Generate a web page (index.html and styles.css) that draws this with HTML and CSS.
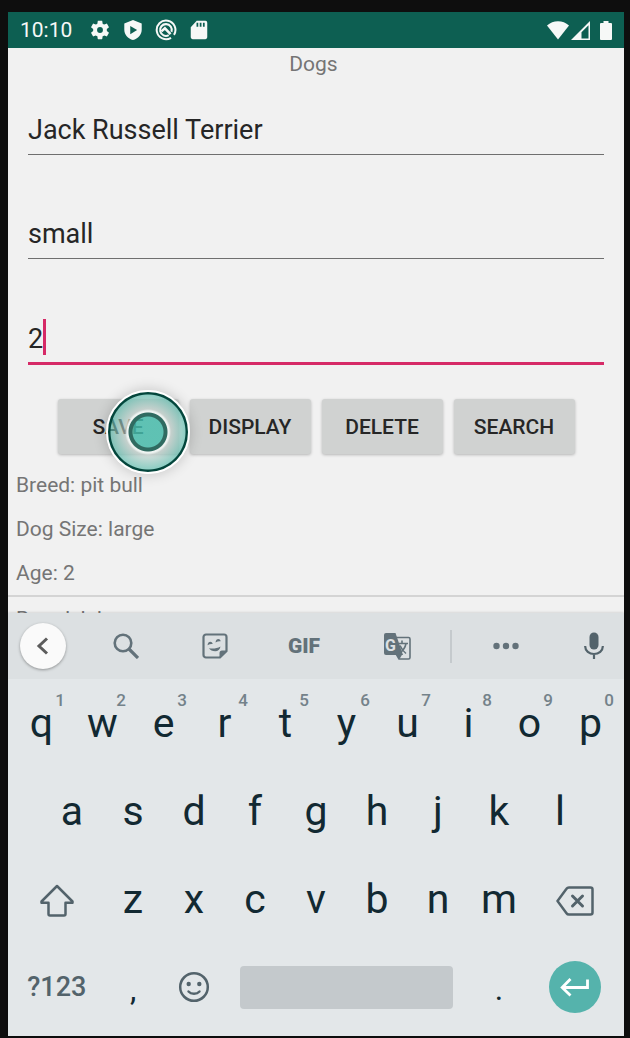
FILE: index.html
```html
<!DOCTYPE html>
<html lang="en">
<head>
<meta charset="utf-8">
<meta name="viewport" content="width=device-width, initial-scale=1">
<title>Dogs</title>
<link rel="stylesheet" href="styles.css">
</head>
<body>
<div class="screen">
  <header class="status">
    <span class="clock">10:10</span>
    <svg class="status-icon" viewBox="0 0 24 24" aria-hidden="true"><path d="M19.43 12.98c.04-.32.07-.64.07-.98s-.03-.66-.07-.98l2.11-1.65c.19-.15.24-.42.12-.64l-2-3.46c-.12-.22-.39-.3-.61-.22l-2.49 1c-.52-.4-1.08-.73-1.69-.98l-.38-2.65C14.46 2.18 14.25 2 14 2h-4c-.25 0-.46.18-.49.42l-.38 2.65c-.61.25-1.17.59-1.69.98l-2.49-1c-.23-.09-.49 0-.61.22l-2 3.46c-.13.22-.07.49.12.64l2.11 1.65c-.04.32-.07.65-.07.98s.03.66.07.98l-2.11 1.65c-.19.15-.24.42-.12.64l2 3.46c.12.22.39.3.61.22l2.49-1c.52.4 1.08.73 1.69.98l.38 2.65c.03.24.24.42.49.42h4c.25 0 .46-.18.49-.42l.38-2.65c.61-.25 1.17-.59 1.69-.98l2.49 1c.23.09.49 0 .61-.22l2-3.46c.12-.22.07-.49-.12-.64l-2.11-1.65zM12 15.2a3.2 3.2 0 1 1 0-6.4 3.2 3.2 0 0 1 0 6.4z"/></svg>
    <svg class="status-icon" viewBox="0 0 24 24" aria-hidden="true"><path fill-rule="evenodd" d="M12 1 2.500 4.800v7C2.500 17 6.500 21.500 12 23c5.500-1.500 9.500-6 9.500-11.200v-7zM9 7.500v9l7.500-4.500z"/></svg>
    <svg class="status-icon" viewBox="0 0 24 24" aria-hidden="true"><g fill="none" stroke="currentColor"><path stroke-width="2.200" d="M17.500 20.500A10.200 10.200 0 1 1 20.700 17.300"/><path stroke-width="2.200" d="M15 17.600A6.400 6.400 0 1 1 18 14"/><path stroke-width="2.800" d="M7 13.500 10.800 10.200 17 16.500"/></g></svg>
    <svg class="status-icon" viewBox="0 0 24 24" aria-hidden="true"><path fill-rule="evenodd" d="M9.500 2H19a2 2 0 0 1 2 2v16a2 2 0 0 1-2 2H5a2 2 0 0 1-2-2V9zM9.300 4v4.500h1.900V4zM12.800 4v4.500h1.900V4zM16.300 4v4.500h1.900V4z"/></svg>
    <div class="status-right">
      <svg class="wifi" viewBox="0 0 22 19" aria-hidden="true"><path d="M0 4.500C6-1.300 16-1.300 22 4.500L11 18.500z"/></svg>
      <svg class="signal" viewBox="0 0 19 19" aria-hidden="true"><path fill-rule="evenodd" d="M0 19 19 0v19zM10.500 17.500h7V4.200l-7 7z"/></svg>
      <svg class="battery" viewBox="0 0 12 19" aria-hidden="true"><path d="M3.500 0h5v2H11a1 1 0 0 1 1 1v15a1 1 0 0 1-1 1H1a1 1 0 0 1-1-1V3a1 1 0 0 1 1-1h2.500z"/></svg>
    </div>
  </header>

  <main class="app">
    <h1 class="title">Dogs</h1>
    <form class="form">
      <div class="field"><input class="input" type="text" aria-label="Breed" value="Jack Russell Terrier"></div>
      <div class="field"><input class="input" type="text" aria-label="Dog size" value="small"></div>
      <div class="field"><input class="input input-active" type="text" aria-label="Age" value="2"><span class="caret"></span></div>
      <div class="actions">
        <div class="action-slot">
          <button class="action" type="button">SAVE</button>
          <span class="touch"></span>
        </div>
        <button class="action" type="button">DISPLAY</button>
        <button class="action" type="button">DELETE</button>
        <button class="action" type="button">SEARCH</button>
      </div>
    </form>
    <ul class="dogs">
      <li class="dog"><p>Breed: pit bull</p><p>Dog Size: large</p><p>Age: 2</p></li>
      <li class="dog"><p>Breed: lab</p></li>
    </ul>
  </main>

  <section class="keyboard" aria-label="Keyboard">
    <div class="tools">
      <button class="tool tool-back" aria-label="Back"><svg viewBox="0 0 24 24" width="24" height="24"><path fill="none" stroke="currentColor" stroke-width="3" d="m16 4.500-8 7.500 8 7.500"/></svg></button>
      <button class="tool" aria-label="Search"><svg viewBox="0 0 26 26" width="26" height="26"><g fill="none" stroke="currentColor"><circle cx="10" cy="10" r="8.300" stroke-width="2.600"/><path stroke-width="3.200" d="m16 16 9 9"/></g></svg></button>
      <button class="tool" aria-label="Stickers"><svg viewBox="0 0 26 26" width="26" height="26"><path fill="none" stroke="currentColor" stroke-width="2.200" d="M4 1.500h18A2.500 2.500 0 0 1 24.500 4v14l-6.500 6.500H4A2.500 2.500 0 0 1 1.500 22V4A2.500 2.500 0 0 1 4 1.500z"/><path d="M17.500 25v-5a2.500 2.500 0 0 1 2.500-2.500h5zM7 15.200c4 .8 8 .2 11.500-1.800-.5 3-2.500 4.800-5.300 4.800-2.800 0-5-1.200-6.200-3zM5.500 12.200c.3-4 4.500-4.600 5.200-1.200-1.800-.2-3.500.2-5.200 1.200zM13.500 9.500c.3-4 4.500-4.600 5.200-1.200-1.800-.2-3.500.2-5.200 1.200z"/></svg></button>
      <button class="tool tool-gif">GIF</button>
      <button class="tool" aria-label="Translate"><svg viewBox="0 0 27 27" width="27" height="27"><path d="M2 0h9.500L19 22H2a2 2 0 0 1-2-2V2a2 2 0 0 1 2-2z"/><path fill="none" stroke="currentColor" stroke-width="1.600" d="M12 4.500h12.500a1.500 1.500 0 0 1 1.500 1.500v18.500a1.500 1.500 0 0 1-1.500 1.500H15l-2.500-4.500"/><path d="m12 21 3.500 5 3-5z"/><text class="translate-g" x="1" y="18">G</text><path fill="none" stroke="currentColor" stroke-width="1.600" d="M14.500 10.500H24M18 7.500v3M22 10.500c-.8 4-3 7-5.500 9M16 12.500c1.500 3.500 3.500 6 6 8"/></svg></button>
      <span class="divider"></span>
      <button class="tool" aria-label="More"><svg viewBox="0 0 26 8" width="26" height="8"><circle cx="3.500" cy="4" r="3.200"/><circle cx="13" cy="4" r="3.200"/><circle cx="22.500" cy="4" r="3.200"/></svg></button>
      <button class="tool tool-mic" aria-label="Voice input"><svg viewBox="0 0 20 28" width="20" height="28"><rect x="5.500" y="0.500" width="9" height="17" rx="4.500"/><path fill="none" stroke="currentColor" stroke-width="2.200" d="M1.200 14v.5a8.800 7.500 0 0 0 17.600 0V14M10 22v5"/></svg></button>
    </div>
    <div class="keys">
      <div class="row">
        <button class="key">q<sup>1</sup></button><button class="key">w<sup>2</sup></button><button class="key">e<sup>3</sup></button><button class="key">r<sup>4</sup></button><button class="key">t<sup>5</sup></button><button class="key">y<sup>6</sup></button><button class="key">u<sup>7</sup></button><button class="key">i<sup>8</sup></button><button class="key">o<sup>9</sup></button><button class="key">p<sup>0</sup></button>
      </div>
      <div class="row row-inset">
        <button class="key">a</button><button class="key">s</button><button class="key">d</button><button class="key">f</button><button class="key">g</button><button class="key">h</button><button class="key">j</button><button class="key">k</button><button class="key">l</button>
      </div>
      <div class="row">
        <button class="key key-wide key-icon" aria-label="Shift"><svg viewBox="0 0 34 34" width="34" height="34"><path fill="none" stroke="currentColor" stroke-width="2.500" stroke-linejoin="round" d="M17 2 1.500 17.500v1.300h7V30a1.500 1.500 0 0 0 1.500 1.500h14a1.500 1.500 0 0 0 1.500-1.500V18.800h7v-1.300z"/></svg></button>
        <button class="key">z</button><button class="key">x</button><button class="key">c</button><button class="key">v</button><button class="key">b</button><button class="key">n</button><button class="key">m</button>
        <button class="key key-wide key-icon" aria-label="Delete"><svg viewBox="0 0 38 30" width="38" height="30"><g fill="none" stroke="currentColor" stroke-width="2.500" stroke-linejoin="round"><path d="M13 1.500h21.500a2 2 0 0 1 2 2v23a2 2 0 0 1-2 2H13a3 3 0 0 1-2.500-1.300L1.500 15l9-12.200A3 3 0 0 1 13 1.500z"/><path stroke-width="3" stroke-linecap="round" d="m16.500 10 10 10M26.500 10l-10 10"/></g></svg></button>
      </div>
      <div class="row">
        <button class="key key-wide key-symbols">?123</button>
        <button class="key key-mark">,</button>
        <button class="key" aria-label="Emoji"><svg viewBox="0 0 32 32" width="32" height="32"><circle cx="16" cy="16" r="13.800" fill="none" stroke="currentColor" stroke-width="2.500"/><circle cx="10.700" cy="13" r="2.200"/><circle cx="21.300" cy="13" r="2.200"/><path fill="none" stroke="currentColor" stroke-width="2.400" stroke-linecap="round" d="M10.500 20.500c2.600 3 8.400 3 11 0"/></svg></button>
        <button class="key key-space" aria-label="Space"></button>
        <button class="key key-mark">.</button>
        <button class="key key-wide" aria-label="Enter"><span class="enter"><svg viewBox="0 0 30 20" width="30" height="20"><path fill="none" stroke="currentColor" stroke-width="2.800" d="M27.500 2.500v8H2.500M10.500 2l-8.300 8.500 8.300 8"/></svg></span></button>
      </div>
    </div>
  </section>
</div>
</body>
</html>
```
FILE: styles.css
```css
* { box-sizing: border-box; }

body {
  margin: 0;
  height: 100vh;
  padding: 12px 6px 2px 8px;
  background: #0e0e0e;
  font-family: Roboto, "Liberation Sans", sans-serif;
}

button, input { font: inherit; }

button {
  padding: 0;
  border: 0;
  background: none;
  color: inherit;
}

svg { display: block; fill: currentColor; }

.screen {
  display: flex;
  flex-direction: column;
  height: 100%;
  background: #f1f1f1;
}

/* Status bar */
.status {
  display: flex;
  align-items: center;
  gap: 11px;
  height: 36px;
  padding: 0 12px;
  background: #0d5f52;
  color: #f6f8f7;
}

.clock { margin-right: 6px; font-size: 21px; }
.status-icon { width: 22px; height: 22px; }

.status-right {
  display: flex;
  align-items: center;
  gap: 2px;
  margin-left: auto;
}

.wifi { width: 22px; height: 19px; }
.signal { width: 19px; height: 19px; }
.battery { width: 12px; height: 19px; margin-left: 8px; }

/* App */
.app {
  flex: 1;
  min-height: 0;
  overflow: hidden;
}

.title {
  margin: 0;
  padding-right: 5px;
  font-size: 21px;
  font-weight: 400;
  line-height: 32px;
  text-align: center;
  color: #757575;
}

.form { padding: 0 20px; }
.field { position: relative; padding-top: 28px; margin-bottom: 29px; }

.input {
  display: block;
  width: 100%;
  height: 47px;
  padding: 0 0 2px;
  border: 0;
  border-bottom: 1px solid #6f6f6f;
  outline: 0;
  background: transparent;
  font-size: 27px;
  color: #262626;
}

.input-active { height: 49px; padding-bottom: 0; border-bottom: 3px solid #d62a67; }

.caret {
  position: absolute;
  left: 15px;
  top: 31px;
  width: 3px;
  height: 36px;
  background: #d62a67;
}

.actions {
  display: flex;
  justify-content: center;
  gap: 11px;
  margin-top: 34px;
}

.action-slot { position: relative; }

.action {
  width: 121px;
  height: 55px;
  border-radius: 3px;
  background: #d0d2d1;
  box-shadow: 0 1px 3px rgba(0, 0, 0, .25);
  font-size: 21px;
  font-weight: 500;
  color: #262626;
}

.touch {
  position: absolute;
  z-index: 1;
  left: 48px;
  top: -9px;
  width: 84px;
  height: 84px;
  border: 2px solid #fff;
  border-radius: 50%;
  background: radial-gradient(circle closest-side,
    rgba(70, 190, 173, .82) 15px, #306b61 16px 19px, #eef3f1 20px 21px,
    rgba(190, 207, 202, .6) 23px, rgba(92, 188, 173, .66) 37px, #03463c 38px);
  box-shadow: 0 0 14px rgba(0, 0, 0, .2);
}

.dogs {
  margin: 9px 0 0;
  padding: 0;
  list-style: none;
  font-size: 21px;
  line-height: 44px;
  color: #757575;
}

.dog { padding: 0 8px; border-bottom: 2px solid #d4d4d4; }
.dog p { margin: 0; }

/* Keyboard */
.keyboard {
  position: relative;
  background: #e3e7e9;
  box-shadow: 0 0 3px rgba(0, 0, 0, .2);
  color: #122932;
}

.tools {
  display: grid;
  grid-template-columns: 74fr 88fr 90fr 88fr 98fr 10fr 100fr 68fr;
  align-items: center;
  height: 66px;
  background: #dce0e2;
  color: #63727a;
}

.tool { display: grid; place-items: center; }

.tool-back {
  width: 46px;
  height: 46px;
  margin-left: 12px;
  border-radius: 50%;
  background: #fafafa;
  box-shadow: 0 1px 3px rgba(0, 0, 0, .35);
  color: #5c5c5c;
}

.tool-gif { font-size: 21px; font-weight: 900; }
.tool-mic { padding-left: 8px; color: #53636b; }
.translate-g { font: 700 16px Roboto, sans-serif; fill: #dce0e2; }
.divider { justify-self: center; width: 2px; height: 33px; background: #c5cacd; }

.keys { padding: 0 3px 5px; }
.row { display: flex; height: 88px; }
.row-inset { padding: 0 5%; }

.key {
  position: relative;
  display: flex;
  flex: 2 1 0;
  align-items: center;
  justify-content: center;
  font-size: 41px;
}

.key sup {
  position: absolute;
  right: 7px;
  top: 11px;
  font-size: 17px;
  font-weight: 500;
  line-height: 20px;
  color: #74828a;
}

.key svg { color: #53636b; }
.key-wide { flex-grow: 3; }
.key-icon { padding-top: 4px; }
.key-symbols { font-size: 27px; font-weight: 500; color: #53636b; }
.key-mark { font-size: 32px; padding-top: 4px; }

.key-space {
  flex-grow: 7;
  align-self: center;
  height: 43px;
  margin: 0 15px;
  border-radius: 4px;
  background: #c4c9cc;
}

.enter {
  display: grid;
  place-items: center;
  width: 52px;
  height: 52px;
  border-radius: 50%;
  background: #55b3ac;
}

.enter svg { color: #fff; }
```
